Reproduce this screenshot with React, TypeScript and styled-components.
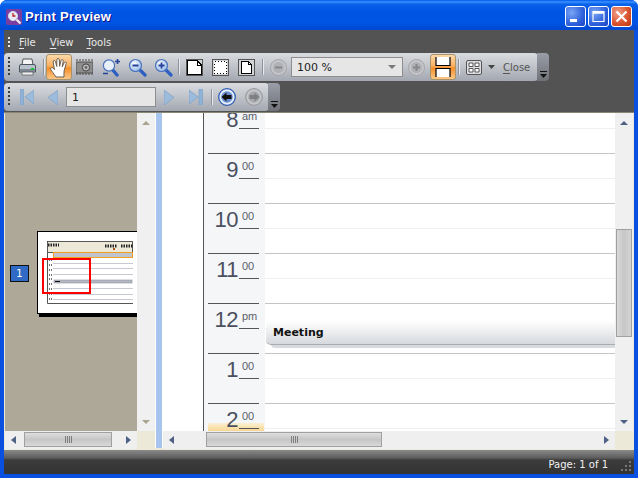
import React from "react";
import styled, { createGlobalStyle } from "styled-components";

const Global = createGlobalStyle`
  html, body { margin: 0; padding: 0; width: 638px; height: 478px; overflow: hidden; background: #fff; }
  * { box-sizing: border-box; }
`;

const UI = `"DejaVu Sans", "Liberation Sans", sans-serif`;

const Win = styled.div`
  width: 638px; height: 478px; display: flex; flex-direction: column;
  background: #0a50e0; border-radius: 7px 7px 0 0; overflow: hidden; font-family: ${UI};
`;
const TitleBar = styled.div`
  height: 30px; flex: none; display: flex; align-items: center; padding: 3px 6px 0 6px;
  background: linear-gradient(to bottom, #0058ee 0, #3a93ff 2px, #0a62ea 4px, #0054e4 12px, #0055e5 22px, #0048d0 30px);
`;
const TitleText = styled.div`
  margin-left: 3px; flex: 1; color: #fff; font: bold 13px "Liberation Sans", sans-serif;
  letter-spacing: 0.3px; text-shadow: 1px 1px 0 #0f1089;
`;
const CapBtn = styled.div<{ $close?: boolean }>`
  width: 21px; height: 21px; margin-left: 2px; border: 1px solid #fff; border-radius: 3px;
  display: flex; align-items: center; justify-content: center;
  background: ${(p) => p.$close
    ? "radial-gradient(circle at 30% 30%, #f0a088, #d8502c 60%, #c03810)"
    : "radial-gradient(circle at 30% 30%, #7aa4f4, #2f62dc 60%, #1c44c4)"};
`;
const Frame = styled.div`
  flex: 1; min-height: 0; margin: 0 4px 4px; display: flex; flex-direction: column; background: #535353;
`;
const Dock = styled.div`
  height: 82px; flex: none; background: #535353; display: flex; flex-direction: column;
`;
const MenuBar = styled.div`
  height: 23px; flex: none; display: flex; align-items: center; padding: 2px 0 0 4px;
  color: #e8e8e8; font-size: 10px;
`;
const Grip = styled.span<{ $light?: boolean }>`
  width: 2px; height: ${(p) => (p.$light ? "12px" : "20px")}; flex: none;
  background: repeating-linear-gradient(to bottom, ${(p) => (p.$light ? "#e8e8e8" : "#3c3c3c")} 0 2px, transparent 2px 4px);
`;
const MenuItem = styled.span<{ $ml: number }>`
  margin-left: ${(p) => p.$ml}px;
  u { text-underline-offset: 2px; }
`;
const BarWrap = styled.div<{ $mt: number }>`
  display: flex; height: 28px; flex: none; margin-top: ${(p) => p.$mt}px; align-self: flex-start;
`;
const Bar = styled.div<{ $w: number }>`
  width: ${(p) => p.$w}px; height: 28px; display: flex; align-items: center; padding-left: 4px;
  border-radius: 4px 4px 4px 4px;
  background: linear-gradient(to bottom, #d9dbdf 0, #c5c8cd 40%, #a3a7b1 100%);
  color: #444;
`;
const Chevron = styled.div`
  width: 12px; height: 28px; margin-left: -1px; border-radius: 0 4px 4px 0;
  background: linear-gradient(to bottom, #9a9ea8, #6f7278);
  display: flex; align-items: flex-end; justify-content: center; padding-bottom: 3px;
`;
const Tool = styled.span<{ $w: number; $ml: number }>`
  width: ${(p) => p.$w}px; margin-left: ${(p) => p.$ml}px; flex: none; display: flex;
  align-items: center; justify-content: center;
`;
const ActiveTool = styled.span<{ $ml: number }>`
  width: 26px; height: 26px; margin-left: ${(p) => p.$ml}px; flex: none; display: flex;
  align-items: center; justify-content: center; border: 1px solid #a89468; border-radius: 3px;
  background: linear-gradient(to bottom, #fcd9a8 0, #f9b163 45%, #f58e28 55%, #fbc88a 100%);
`;
const Sep = styled.span<{ $ml: number }>`
  width: 1px; height: 16px; margin-left: ${(p) => p.$ml}px; flex: none; background: #8e929c;
  box-shadow: 1px 0 0 #e6e8ea;
`;
const Field = styled.div<{ $w: number; $ml: number }>`
  width: ${(p) => p.$w}px; height: 20px; margin-left: ${(p) => p.$ml}px; flex: none;
  background: #e6e6e6; border: 1px solid #8e8e8e; color: #222; font-size: 11px;
  display: flex; align-items: center; padding: 0 5px; justify-content: space-between;
`;
const ComboArrow = styled.span`
  width: 0; height: 0; border-left: 4px solid transparent; border-right: 4px solid transparent;
  border-top: 4px solid #77797d; margin-right: 1px;
`;
const CloseLabel = styled.span`
  margin-left: 8px; font-size: 10px; color: #555; flex: none;
  u { text-underline-offset: 2px; }
`;
const Main = styled.div`
  flex: 1; min-height: 0; display: flex; background: #ece9d8; border-top: 1px solid #8a8674;
  padding: 0 0 2px 1px;
`;
const LeftPane = styled.div`
  width: 150px; flex: none; display: grid; grid-template-columns: 132px 18px; grid-template-rows: 318px 18px;
`;
const Thumbs = styled.div`
  background: #ada898; display: flex; align-items: center; overflow: hidden; padding-left: 5px;
`;
const Badge = styled.div`
  width: 19px; height: 17px; flex: none; margin-top: 3px; background: #316ac5; border: 1px solid #111;
  color: #fff; font-size: 10px; display: flex; align-items: center; justify-content: center;
`;
const ThumbArt = styled.svg`
  flex: none; margin-left: 8px; margin-top: 4px; display: block;
`;
const Splitter = styled.div`
  width: 8px; flex: none; background: #a6c4ee; border-left: 1px solid #fff; border-right: 1px solid #fff;
`;
const RightPane = styled.div`
  width: 470px; flex: none; display: grid; grid-template-columns: 452px 18px; grid-template-rows: 318px 18px;
`;
const Sheet = styled.div`
  background: #fff; overflow: hidden; position: relative;
`;
const Rows = styled.div`
  margin-top: -10px; padding-left: 40px;
`;
const HourRow = styled.div`
  position: relative; display: flex; height: 50px;
`;
const TimeCell = styled.div<{ $now?: boolean }>`
  width: 62px; flex: none; padding-left: 4px; background-color: #f4f6f8; border-left: 1px solid #555;
  ${(p) => p.$now && `
    background-image: linear-gradient(to bottom, #fbf0d4, #f8d690);
    background-size: 56px 8px; background-position: 4px 20px; background-repeat: no-repeat;
  `}
`;
const HourHead = styled.div`
  width: 51px; height: 26px; border-top: 1px solid #555; display: flex; justify-content: flex-end; color: #4a5060;
`;
const HourNum = styled.span`
  font: 22px/22px "Liberation Sans", sans-serif; margin-top: 5px; letter-spacing: -0.5px;
`;
const MinBox = styled.span`
  width: 20px; margin-left: 1px; height: 25px; border-bottom: 1px solid #555;
  font: 11px/11px "Liberation Sans", sans-serif; letter-spacing: -0.2px; color: #5a5e68;
  padding: 7px 0 0 3px; flex: none; overflow: visible;
`;
const SlotCol = styled.div`
  flex: 1; border-top: 1px solid #c4c4c4; position: relative;
  &::after { content: ""; position: absolute; left: 0; right: 0; top: 24px; height: 1px; background: #f0f0f0; }
`;
const Meeting = styled.div`
  position: absolute; left: 63px; right: 0; top: 17px; height: 25px; z-index: 1;
  background: linear-gradient(to bottom, #fff 0, #f4f5f6 30%, #d6d9de 100%);
  border-bottom: 1px solid #a8acb4; border-top-left-radius: 5px; border-bottom-left-radius: 5px;
  box-shadow: 4px 4px 0 -1px #d8dadd; font: bold 11px ${UI}; color: #111;
  display: flex; align-items: center; padding: 1px 0 0 7px;
`;
const VBar = styled.div`
  background: #f0f0f0; position: relative; display: flex; flex-direction: column; align-items: center;
  justify-content: space-between; padding: 8px 0 7px;
`;
const VThumb = styled.div`
  position: absolute; left: 1px; right: 1px; top: 116px; height: 108px; background: linear-gradient(to right, #d8d8d8, #c6c6c6 50%, #d4d4d4);
  border: 1px solid #a0a0a0;
`;
const HBar = styled.div`
  background: #efefef; display: flex; align-items: center; position: relative; padding: 0 6px;
  justify-content: space-between;
`;
const HThumb = styled.div<{ $l: number; $w: number }>`
  position: absolute; left: ${(p) => p.$l}px; width: ${(p) => p.$w}px; top: 1px; height: 15px;
  border: 1px solid #a0a0a0; background: linear-gradient(to bottom, #dedede, #c6c6c6 50%, #d8d8d8);
  display: flex; align-items: center; justify-content: center; gap: 1px;
`;
const Rib = styled.i`
  width: 1px; height: 7px; background: #7e7e7e; display: block;
`;
const Corner = styled.div`
  background: #ece9d8;
`;
const UpDown = styled.span<{ $dir: "up" | "down"; $c: string }>`
  width: 0; height: 0; border-left: 4px solid transparent; border-right: 4px solid transparent;
  ${(p) => (p.$dir === "up" ? "border-bottom" : "border-top")}: 4px solid ${(p) => p.$c};
`;
const LeftRight = styled.span<{ $dir: "left" | "right" }>`
  width: 0; height: 0; border-top: 4px solid transparent; border-bottom: 4px solid transparent;
  ${(p) => (p.$dir === "left" ? "border-right" : "border-left")}: 5px solid #4d6185;
`;
const Status = styled.div`
  height: 24px; flex: none; display: flex; align-items: center; justify-content: flex-end; padding: 4px 2px 0 0;
  background: linear-gradient(to bottom, #8a8a8a 0, #5c5c5c 8px, #3c3c3c 10px, #333 24px);
  color: #f2f2f2; font-size: 10px;
`;
const ResizeGrip = styled.svg`
  margin-left: 12px; flex: none; align-self: flex-end; margin-bottom: 3px;
`;

const Magnifier = ({ sign }: { sign?: "plus" | "minus" | "both" }) => (
  <svg width="19" height="19" viewBox="0 0 19 19">
    <defs>
      <radialGradient id="lens" cx="0.4" cy="0.35" r="0.7">
        <stop offset="0" stopColor="#ffffff" /><stop offset="1" stopColor="#8fb4ea" />
      </radialGradient>
    </defs>
    <path d="M10.5 10.5 L17 17" stroke="#2f5fc0" strokeWidth="3.2" strokeLinecap="round" />
    <circle cx="7.5" cy="7.5" r="6" fill="url(#lens)" stroke="#4a72bc" strokeWidth="1.2" />
    {sign === "plus" && <path d="M4.5 7.5h6M7.5 4.5v6" stroke="#24439a" strokeWidth="1.8" />}
    {sign === "minus" && <path d="M4.5 7.5h6" stroke="#24439a" strokeWidth="1.8" />}
  </svg>
);
const ZoomMulti = () => (
  <svg width="19" height="19" viewBox="0 0 19 19">
    <path d="M9.5 10.5 L15 17" stroke="#2f5fc0" strokeWidth="3.4" strokeLinecap="round" />
    <circle cx="7" cy="7.5" r="5.6" fill="#e8f0fc" stroke="#4a72bc" strokeWidth="1.2" />
    <path d="M13 3.5h5M15.5 1v5" stroke="#24439a" strokeWidth="1.6" />
    <path d="M1 15.5h5" stroke="#24439a" strokeWidth="1.6" />
  </svg>
);
const Printer = () => (
  <svg width="19" height="18" viewBox="0 0 19 18">
    <path d="M5 1h9l1 6H4z" fill="#f4f4f4" stroke="#555" />
    <path d="M1.5 8 Q1.5 6.5 3 6.5H16 Q17.5 6.5 17.5 8V14H1.5z" fill="#b8c0cc" stroke="#4e5660" />
    <rect x="2" y="11" width="15" height="3" fill="#7e8794" />
    <rect x="4" y="14" width="11" height="3" fill="#eef0f2" stroke="#555" strokeWidth="0.7" />
    <rect x="13" y="10" width="3" height="2" fill="#1fc03a" />
  </svg>
);
const HandIcon = () => (
  <svg width="20" height="21" viewBox="0 0 20 21">
    <path d="M7 20 C5 17 2.5 14 1.8 12.5 C1 10.7 3 9.8 4.2 11.2 L5.4 12.6 L4.2 5 C3.9 3.2 6 2.8 6.5 4.6 L7.8 9.5 L7.8 2.8 C7.8 1 10.2 1 10.3 2.8 L10.6 9.3 L12 3.6 C12.5 1.9 14.6 2.4 14.2 4.2 L13.2 9.8 L15.2 5.6 C16 4.2 17.8 4.9 17.2 6.6 L15.2 13.5 C14.8 15.5 15 17.5 15 20 Z"
      fill="#fff" stroke="#6a5f50" strokeWidth="1" strokeLinejoin="round" />
  </svg>
);
const Camera = () => (
  <svg width="17" height="16" viewBox="0 0 17 16">
    <rect x="0" y="3" width="17" height="11" fill="#8d8d8d" stroke="#4e4e4e" />
    <path d="M0 1h17M0 15h17" stroke="#444" strokeDasharray="2 1" />
    <circle cx="10" cy="8.5" r="3.6" fill="#bbb" stroke="#444" />
    <circle cx="10" cy="8.5" r="1.4" fill="#666" />
  </svg>
);
const PageBox = ({ kind }: { kind: "full" | "dots" | "small" }) => (
  <svg width="17" height="17" viewBox="0 0 17 17" shapeRendering="crispEdges">
    <rect x="0.5" y="0.5" width="16" height="16" fill="#d2d4d8" stroke="#555" />
    {kind === "full" && <path d="M1.5 1.5H11L15.5 6V15.5H1.5z" fill="#fff" stroke="#000" />}
    {kind === "dots" && <rect x="2" y="2" width="13" height="13" fill="#fff" />}
    {kind === "dots" && <path d="M2.5 2.5H14.5V14.5H2.5V2.5" fill="none" stroke="#000" strokeDasharray="1 2" />}
    {kind === "small" && <path d="M3.5 2.5H10.5L13.5 5.5V14.5H3.5z" fill="#fff" stroke="#000" />}
    {kind !== "dots" && <path d={kind === "full" ? "M11 1.5V6H15.5" : "M10.5 2.5V5.5H13.5"} fill="none" stroke="#000" />}
  </svg>
);
const RoundBtn = ({ sign }: { sign: "minus" | "plus" }) => (
  <svg width="17" height="17" viewBox="0 0 17 17">
    <circle cx="8.5" cy="8.5" r="8" fill="#c4c5c8" stroke="#a2a4a8" />
    <circle cx="8.5" cy="8.5" r="5.5" fill="#b0b1b4" />
    <path d={sign === "minus" ? "M5 8.5h7" : "M5 8.5h7M8.5 5v7"} stroke="#85878c" strokeWidth="2" />
  </svg>
);
const FitPage = () => (
  <svg width="16" height="20" viewBox="0 0 16 20">
    <path d="M1 0v8.5h14V0M1 20v-8.5h14V20" fill="#fff" stroke="#000" strokeWidth="1.2" />
  </svg>
);
const MultiPage = () => (
  <svg width="16" height="15" viewBox="0 0 16 15">
    <rect x="0.5" y="0.5" width="15" height="14" rx="1.5" fill="#dcdde0" stroke="#555" />
    <path d="M3 3h4v3.5H3zM9 3h4v3.5H9zM3 8.5h4V12H3zM9 8.5h4V12H9z" fill="#fff" stroke="#333" strokeWidth="0.8" />
  </svg>
);
const SmallArrow = () => (
  <svg width="7" height="4" viewBox="0 0 7 4"><path d="M0 0h7L3.5 4z" fill="#444" /></svg>
);
const NavIcon = ({ dir, bar }: { dir: "l" | "r"; bar?: boolean }) => {
  const tri = dir === "l" ? (bar ? "M5 8L14 1V15z" : "M0 7.5L10 0V15z") : bar ? "M0 1L9 8L0 15z" : "M0 0L10 7.5L0 15z";
  return (
    <svg width={bar ? 14 : 10} height={bar ? 16 : 15} viewBox={`0 0 ${bar ? 14 : 10} ${bar ? 16 : 15}`}>
      <path d={tri} fill="#9dbcdc" stroke="#7b9fc4" strokeWidth="0.7" />
      {bar && <rect x={dir === "l" ? 0 : 10} y="0" width="3.5" height="16" fill="#8fb2d8" stroke="#7b9fc4" strokeWidth="0.6" />}
    </svg>
  );
};
const HistoryBtn = ({ back }: { back?: boolean }) => (
  <svg width="18" height="18" viewBox="0 0 18 18">
    <circle cx="9" cy="9" r="8.3" fill={back ? "#e6eefa" : "#c6c7ca"} stroke={back ? "#2e5cb4" : "#9a9ca0"} strokeWidth="1.3" />
    <circle cx="9" cy="9" r="5.8" fill={back ? "#6b8fd0" : "#a8a9ac"} />
    {back
      ? <path d="M3.5 9L8.5 4.5V7H13.5V11H8.5V13.5z" fill="#111" />
      : <path d="M14.5 9L9.5 4.5V7H4.5V11H9.5V13.5z" fill="#7f8084" />}
  </svg>
);
const ChevronIcon = () => (
  <svg width="7" height="7" viewBox="0 0 7 7">
    <path d="M0 0h7v1H0z" fill="#111" />
    <path d="M0 3h7L3.5 7z" fill="#111" />
  </svg>
);
const AppIcon = () => (
  <svg width="16" height="16" viewBox="0 0 16 16">
    <rect x="0" y="0" width="16" height="16" rx="2" fill="#7a3ea0" />
    <circle cx="7" cy="7" r="4.6" fill="#e8ecf6" stroke="#cfd4e4" />
    <path d="M7 4v3h2.5" stroke="#c02020" strokeWidth="1.3" fill="none" />
    <path d="M10.5 10.5L14.5 14.5" stroke="#e8e8f0" strokeWidth="2.4" />
  </svg>
);

const Thumb = () => {
  const lines = [263, 268, 274, 288, 294, 299];
  const ticks = [260, 265, 270, 275, 279, 284, 289, 294, 299];
  return (
    <ThumbArt width="100" height="86" viewBox="37 231 100 86">
      <rect x="39" y="233" width="110" height="84" fill="#000" />
      <rect x="37.5" y="231.5" width="110" height="82" fill="#fff" stroke="#000" />
      <rect x="47.5" y="241.5" width="85" height="11" fill="#ece9d8" stroke="#333" strokeWidth="0.8" />
      <path d="M48 245h11M105 246h12M121 246h12" stroke="#222" strokeWidth="3" strokeDasharray="1.5 1" />
      <rect x="113" y="248" width="2" height="2" fill="#b05010" />
      <rect x="53.5" y="252.5" width="79" height="5" fill="#c0c4ce" stroke="#f0a020" />
      {lines.map((y) => <path key={y} d={`M53 ${y}.5H133`} stroke="#c8cad2" />)}
      <rect x="54" y="280" width="78" height="3" fill="#b4b8c2" stroke="#8e929c" strokeWidth="0.6" />
      <path d="M55 281.5h5" stroke="#111" />
      <path d="M47.5 252V303.5H133" fill="none" stroke="#555" />
      {ticks.map((y) => <path key={y} d={`M49 ${y}h4`} stroke="#444" strokeWidth="1.6" strokeDasharray="1 1" />)}
      <rect x="43" y="259" width="47" height="34" fill="none" stroke="#f00" strokeWidth="2" />
    </ThumbArt>
  );
};

const hours: [string, string][] = [["8", "am"], ["9", "00"], ["10", "00"], ["11", "00"], ["12", "pm"], ["1", "00"], ["2", "00"]];

const ThreeRibs = () => (<><Rib /><Rib /><Rib /><Rib /></>);

export default function App() {
  return (
    <Win>
      <Global />
      <TitleBar>
        <AppIcon />
        <TitleText>Print Preview</TitleText>
        <CapBtn>
          <svg width="19" height="19" viewBox="0 0 19 19"><rect x="4" y="12" width="7" height="3" fill="#fff" /></svg>
        </CapBtn>
        <CapBtn>
          <svg width="19" height="19" viewBox="0 0 19 19"><path d="M4 4.5h11v10H4zM4 6h11" fill="none" stroke="#fff" strokeWidth="1.2" /><rect x="4" y="4" width="11" height="2.5" fill="#fff" /></svg>
        </CapBtn>
        <CapBtn $close>
          <svg width="19" height="19" viewBox="0 0 19 19"><path d="M4.5 4.5L14.5 14.5M14.5 4.5L4.5 14.5" stroke="#fff" strokeWidth="2.2" /></svg>
        </CapBtn>
      </TitleBar>
      <Frame>
        <Dock>
          <MenuBar>
            <Grip $light />
            <MenuItem $ml={9}><u>F</u>ile</MenuItem>
            <MenuItem $ml={14}><u>V</u>iew</MenuItem>
            <MenuItem $ml={13}><u>T</u>ools</MenuItem>
          </MenuBar>
          <BarWrap $mt={0}>
            <Bar $w={534}>
              <Grip />
              <Tool $w={19} $ml={8}><Printer /></Tool>
              <Sep $ml={6} />
              <ActiveTool $ml={2}><HandIcon /></ActiveTool>
              <Tool $w={17} $ml={4}><Camera /></Tool>
              <Tool $w={19} $ml={9}><ZoomMulti /></Tool>
              <Tool $w={19} $ml={7}><Magnifier sign="minus" /></Tool>
              <Tool $w={19} $ml={7}><Magnifier sign="plus" /></Tool>
              <Sep $ml={5} />
              <Tool $w={17} $ml={7}><PageBox kind="full" /></Tool>
              <Tool $w={17} $ml={9}><PageBox kind="dots" /></Tool>
              <Tool $w={17} $ml={9}><PageBox kind="small" /></Tool>
              <Sep $ml={7} />
              <Tool $w={17} $ml={7}><RoundBtn sign="minus" /></Tool>
              <Field $w={112} $ml={4}>100 %<ComboArrow /></Field>
              <Tool $w={17} $ml={5}><RoundBtn sign="plus" /></Tool>
              <ActiveTool $ml={5}><FitPage /></ActiveTool>
              <Sep $ml={2} />
              <Tool $w={16} $ml={7}><MultiPage /></Tool>
              <Tool $w={7} $ml={6}><SmallArrow /></Tool>
              <CloseLabel><u>C</u>lose</CloseLabel>
            </Bar>
            <Chevron><ChevronIcon /></Chevron>
          </BarWrap>
          <BarWrap $mt={2}>
            <Bar $w={265}>
              <Grip />
              <Tool $w={14} $ml={10}><NavIcon dir="l" bar /></Tool>
              <Tool $w={10} $ml={14}><NavIcon dir="l" /></Tool>
              <Field $w={90} $ml={8}>1</Field>
              <Tool $w={10} $ml={8}><NavIcon dir="r" /></Tool>
              <Tool $w={14} $ml={15}><NavIcon dir="r" bar /></Tool>
              <Sep $ml={8} />
              <Tool $w={18} $ml={6}><HistoryBtn back /></Tool>
              <Tool $w={18} $ml={9}><HistoryBtn /></Tool>
            </Bar>
            <Chevron><ChevronIcon /></Chevron>
          </BarWrap>
        </Dock>
        <Main>
          <LeftPane>
            <Thumbs>
              <Badge>1</Badge>
              <Thumb />
            </Thumbs>
            <VBar>
              <UpDown $dir="up" $c="#a8a490" />
              <UpDown $dir="down" $c="#a8a490" />
            </VBar>
            <HBar>
              <LeftRight $dir="left" />
              <HThumb $l={19} $w={88}><ThreeRibs /></HThumb>
              <LeftRight $dir="right" />
            </HBar>
            <Corner />
          </LeftPane>
          <Splitter />
          <RightPane>
            <Sheet>
              <Rows>
                {hours.map(([h, m], i) => (
                  <HourRow key={h}>
                    <TimeCell $now={i === 6}>
                      <HourHead>
                        <HourNum>{h}</HourNum>
                        <MinBox>{m}</MinBox>
                      </HourHead>
                    </TimeCell>
                    <SlotCol />
                    {i === 4 && <Meeting>Meeting</Meeting>}
                  </HourRow>
                ))}
              </Rows>
            </Sheet>
            <VBar>
              <UpDown $dir="up" $c="#4d6185" />
              <VThumb />
              <UpDown $dir="down" $c="#4d6185" />
            </VBar>
            <HBar>
              <LeftRight $dir="left" />
              <HThumb $l={43} $w={176}><ThreeRibs /></HThumb>
              <LeftRight $dir="right" />
            </HBar>
            <Corner />
          </RightPane>
        </Main>
        <Status>
          Page: 1 of 1
          <ResizeGrip width="12" height="11" viewBox="0 0 12 11">
            <path d="M9 1h2v2H9zM5 5h2v2H5zM9 5h2v2H9zM1 9h2v2H1zM5 9h2v2H5zM9 9h2v2H9z" fill="#777" />
          </ResizeGrip>
        </Status>
      </Frame>
    </Win>
  );
}
